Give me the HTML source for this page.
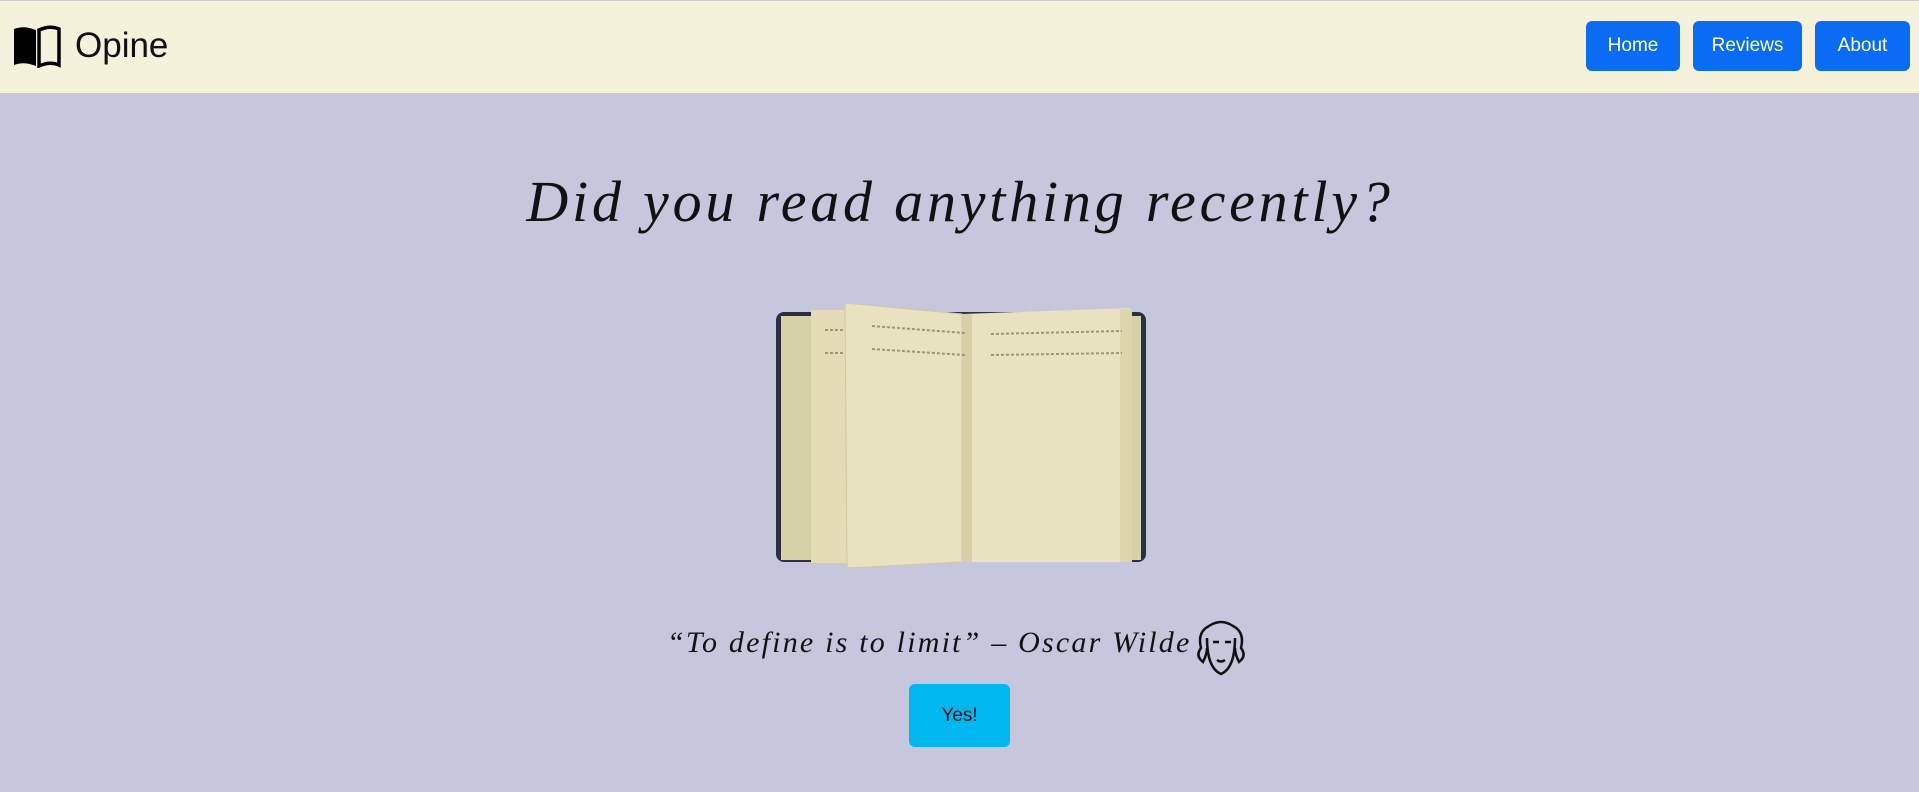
<!DOCTYPE html>
<html><head><meta charset="utf-8"><style>
*{margin:0;padding:0;box-sizing:border-box}
body{width:1919px;height:792px;background:#c6c6dc;font-family:"Liberation Sans",sans-serif;position:relative;overflow:hidden}
nav{position:absolute;left:0;top:0;width:1919px;height:93px;background:#f4f2da;border-top:1px solid #ccc}
.brand{position:absolute;left:75px;top:25px;font-size:35px;color:#111}
.btn{position:absolute;top:20px;height:50px;background:#0a6cf5;color:#fff;border-radius:6px;font-size:19px;display:flex;align-items:center;justify-content:center}
h1{position:absolute;left:423px;top:168px;width:1074px;text-align:center;font:italic 58px "Liberation Serif",serif;color:#111;letter-spacing:3.8px;font-weight:normal;white-space:nowrap}
.q{position:absolute;left:667px;top:626px;width:530px;font:italic 30px "Liberation Serif",serif;color:#111;white-space:nowrap;letter-spacing:2.2px}
.yes{position:absolute;left:909px;top:684px;width:101px;height:63px;background:#00b8ef;border-radius:6px;font-size:19px;color:#111;display:flex;align-items:center;justify-content:center}
</style></head><body>
<nav>
<svg style="position:absolute;left:12px;top:24px" width="50" height="43" viewBox="0 0 50 43"><path d="M2 4 Q12 0 24 5 V41 Q12 36 2 40 Z" fill="#000"/><path d="M27 5 Q38 0 47 4 V40 Q38 36 27 41 Z" fill="none" stroke="#000" stroke-width="3.5"/></svg>
<div class="brand">Opine</div>
<div class="btn" style="left:1586px;width:94px">Home</div>
<div class="btn" style="left:1693px;width:109px">Reviews</div>
<div class="btn" style="left:1815px;width:95px">About</div>
</nav>
<h1>Did you read anything recently?</h1>
<svg style="position:absolute;left:775px;top:300px" width="372" height="272" viewBox="0 0 372 272">
<rect x="1" y="12" width="370" height="250" rx="8" fill="#2d2d45"/>
<rect x="6" y="16" width="360" height="244" fill="#d6d2a8"/>
<path d="M36 10 H130 V263 H36 Z" fill="#e3dcb6"/>
<path d="M70 3 L187 14 V262 L72 268 Z" fill="#e8e2c0" stroke="#d0c99f"/>
<path d="M187 14 L355 8 V262 L187 262 Z" fill="#e8e2c0"/>
<rect x="187" y="14" width="10" height="248" fill="#d6cfa8"/>
<rect x="345" y="9" width="12" height="253" fill="#dcd5ae"/>
<g stroke="#9c9678" stroke-width="2" stroke-dasharray="3 2">
<line x1="50" y1="30" x2="70" y2="30"/><line x1="50" y1="53" x2="70" y2="53"/>
<line x1="97" y1="26" x2="190" y2="33"/><line x1="97" y1="49" x2="190" y2="55"/>
<line x1="216" y1="34" x2="347" y2="31"/><line x1="216" y1="55" x2="347" y2="53"/>
</g></svg>
<div class="q">“To define is to limit” – Oscar Wilde</div>
<svg style="position:absolute;left:1191px;top:618px" width="60" height="60" viewBox="0 0 60 60" fill="none" stroke="#111" stroke-width="2.5"><path d="M18 8 Q30 0 42 8 Q54 14 50 30 Q56 38 48 44 Q44 36 44 30 M18 8 Q6 14 10 30 Q4 38 12 44 Q16 36 16 30"/><path d="M16 20 Q16 50 30 56 Q44 50 44 20"/><path d="M22 24 h6 M34 24 h6 M26 42 q4 3 8 0"/></svg>
<div class="yes">Yes!</div>
</body></html>
